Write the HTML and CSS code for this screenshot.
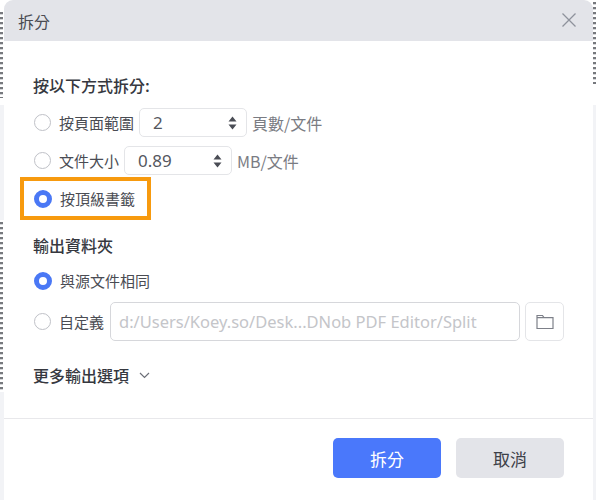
FILE: index.html
```html
<!DOCTYPE html>
<html lang="zh-Hant">
<head>
  <meta charset="UTF-8">
  <title>拆分</title>
  <link rel="stylesheet" href="styles.css">
</head>
<body>
  <div class="dialog">
    <div class="dialog-header">
      <span>拆分</span>
      <svg class="close" width="16" height="16" viewBox="0 0 16 16"><path d="M1.5 1.5l13 13M14.5 1.5l-13 13" stroke="#8e929c" stroke-width="1.3" fill="none"/></svg>
    </div>
    <div class="dialog-body">
      <h3 class="section-title first">按以下方式拆分:</h3>
      <div class="row range-row">
        <span class="radio"></span>
        <span class="label">按頁面範圍</span>
        <div class="spinner">
          <span>2</span>
          <svg width="9" height="16" viewBox="0 0 9 16"><path d="M4.5 1.5L8.5 6.5H.5zM4.5 14.5L.5 9.5H8.5z" fill="#4a4d55"/></svg>
        </div>
        <span class="unit">頁數/文件</span>
      </div>
      <div class="row size-row">
        <span class="radio"></span>
        <span class="label">文件大小</span>
        <div class="spinner">
          <span>0.89</span>
          <svg width="9" height="16" viewBox="0 0 9 16"><path d="M4.5 1.5L8.5 6.5H.5zM4.5 14.5L.5 9.5H8.5z" fill="#4a4d55"/></svg>
        </div>
        <span class="unit">MB/文件</span>
      </div>
      <div class="row bookmark-row">
        <span class="highlight"></span>
        <span class="radio checked"></span>
        <span class="label">按頂級書籤</span>
      </div>

      <h3 class="section-title output-title">輸出資料夾</h3>
      <div class="row same-row">
        <span class="radio checked"></span>
        <span class="label">與源文件相同</span>
      </div>
      <div class="row custom-row">
        <span class="radio"></span>
        <span class="label">自定義</span>
        <div class="path-input">d:/Users/Koey.so/Desk...DNob PDF Editor/Split</div>
        <button class="folder-btn">
          <svg width="18" height="16" viewBox="0 0 18 16"><path d="M1 14.5V1.5h5.5l1.5 2.2h9v10.8zM1 3.7h7" stroke="#7d8089" stroke-width="1.2" fill="none"/></svg>
        </button>
      </div>

      <div class="more">
        <span>更多輸出選項</span>
        <svg width="11" height="7" viewBox="0 0 11 7"><path d="M1 1l4.5 4.5L10 1" stroke="#6c6f78" stroke-width="1.2" fill="none"/></svg>
      </div>
    </div>
    <div class="dialog-footer">
      <button class="btn primary">拆分</button>
      <button class="btn">取消</button>
    </div>
  </div>
</body>
</html>
```

FILE: styles.css
```css
html, body {
  height: 100%;
}
/* page behind the dialog: only thin strips of it show at the edges */
body {
  margin: 0;
  padding: 0 3px 0 4px;
  box-sizing: border-box;
  background-color: white;
  background-image:
    repeating-linear-gradient(#77797e 0 2px, #d5d6d9 2px 3px, transparent 3px 5px),
    repeating-linear-gradient(#77797e 0 2px, #d5d6d9 2px 3px, transparent 3px 5px),
    repeating-linear-gradient(#77797e 0 2px, #d5d6d9 2px 3px, transparent 3px 5px),
    linear-gradient(#f2f3f6, #f2f3f6),
    linear-gradient(#f2f3f6, #f2f3f6),
    linear-gradient(#f2f3f6, #f2f3f6);
  background-size: 3px 86px, 3px 170px, 3px 82px, 4px 115px, 4px 108px, 3px 395px;
  background-position: 0 12px, 0 222px, right 2px, 0 105px, 0 392px, right 105px;
  background-repeat: no-repeat;
  font-family: "Noto Sans CJK TC", "Noto Sans", sans-serif;
  color: #3d4048;
  overflow: hidden;
}
.dialog {
  height: 500px;
  display: flex;
  flex-direction: column;
  background-color: white;
  border-radius: 9px;
  overflow: hidden;
}
.dialog-header {
  height: 41px;
  flex: none;
  display: flex;
  align-items: center;
  justify-content: space-between;
  padding: 0 16px 0 14px;
  background-color: #e3e4e9;
  font-size: 16px;
  color: #4a4c53;
}
.close {
  margin-top: -1px;
}
.dialog-body {
  flex: 1;
  padding: 0 29px;
}
.section-title {
  margin: 0;
  font-size: 16px;
  line-height: 22px;
  font-weight: 500;
  color: #36383f;
}
.section-title.first {
  margin-top: 33px;
}
.section-title.output-title {
  margin-top: 21px;
}
.row {
  position: relative;
  display: flex;
  align-items: center;
  height: 29px;
  font-size: 15px;
}
.range-row {
  margin-top: 12px;
}
.size-row {
  margin-top: 9px;
}
.bookmark-row {
  margin-top: 9px;
}
.same-row {
  margin-top: 10px;
}
.custom-row {
  height: 39px;
  margin-top: 7px;
}
.radio {
  width: 15px;
  height: 15px;
  flex: none;
  margin: 0 8px 0 1px;
  border: 1.5px solid #bfc1c7;
  border-radius: 50%;
  background-color: white;
}
.radio.checked {
  width: 8px;
  height: 8px;
  border: 5px solid #4a78f5;
}
.label {
  color: #4a4c53;
  white-space: nowrap;
}
/* orange box drawn on top of the screenshot */
.highlight {
  position: absolute;
  left: -13px;
  top: -7px;
  width: 123px;
  height: 35px;
  border: 4px solid #f79a0e;
}
.spinner {
  width: 108px;
  height: 29px;
  box-sizing: border-box;
  display: flex;
  align-items: center;
  justify-content: space-between;
  margin: 0 5px 0 5px;
  padding: 0 9px 0 13px;
  border: 1px solid #e4e5e8;
  border-radius: 5px;
  font-family: "Noto Sans", sans-serif;
  font-size: 17px;
  color: #55575e;
}
.unit {
  font-size: 16px;
  color: #7a7c83;
  white-space: nowrap;
}
.path-input {
  width: 410px;
  height: 39px;
  flex: none;
  box-sizing: border-box;
  margin-left: 6px;
  padding-left: 8px;
  line-height: 37px;
  border: 1px solid #d6d7db;
  border-radius: 5px;
  font-family: "Noto Sans", sans-serif;
  font-size: 16.5px;
  color: #c4c5c9;
  white-space: nowrap;
  overflow: hidden;
}
.folder-btn {
  width: 39px;
  height: 39px;
  flex: none;
  margin-left: 5px;
  padding: 0;
  display: flex;
  align-items: center;
  justify-content: center;
  background-color: white;
  border: 1px solid #e4e5e8;
  border-radius: 5px;
}
.more {
  display: flex;
  align-items: center;
  gap: 10px;
  margin-top: 23px;
  font-size: 16px;
  line-height: 22px;
  font-weight: 500;
  color: #36383f;
}
.dialog-footer {
  height: 82px;
  flex: none;
  box-sizing: border-box;
  display: flex;
  justify-content: flex-end;
  gap: 15px;
  padding: 19px 29px 0 0;
  border-top: 1px solid #e8e8eb;
}
.btn {
  width: 108px;
  height: 40px;
  padding: 0;
  border: none;
  border-radius: 5px;
  background-color: #e3e4e9;
  font-family: "Noto Sans CJK TC", sans-serif;
  font-size: 17px;
  color: #3d4048;
}
.btn.primary {
  background-color: #4a78fb;
  color: white;
}
```
